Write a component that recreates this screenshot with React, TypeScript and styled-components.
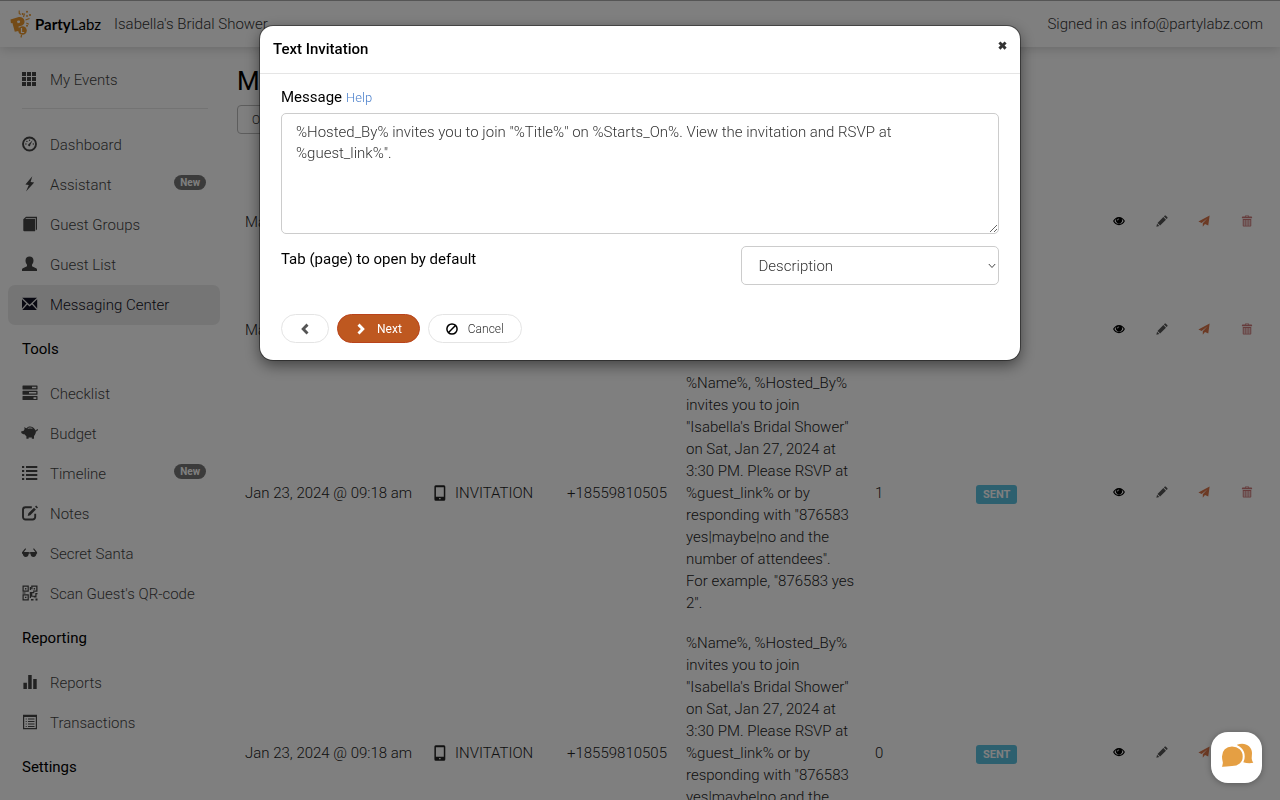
import React from "react";
import styled, { createGlobalStyle } from "styled-components";

const GlobalStyle = createGlobalStyle`
  *, *::before, *::after { box-sizing: border-box; }
  body {
    margin: 0;
    overflow: hidden;
    background: #fff;
    color: #333;
    font: 300 15px/22px Roboto, "Liberation Sans", sans-serif;
  }
  button, select, textarea { font: inherit; color: inherit; }
  a { color: inherit; text-decoration: none; }
`;

/* ---------- icons ---------- */

type IconName =
  | "grid" | "dashboard" | "flash" | "book" | "user" | "envelope" | "tasks"
  | "piggy" | "list" | "edit" | "glasses" | "qrcode" | "stats" | "listAlt"
  | "phone" | "eye" | "pencil" | "send" | "trash" | "left" | "right" | "ban" | "close";

const glyphs: Record<IconName, React.ReactNode> = {
  grid: <path d="M0 1h4v4H0zM5 1h4v4H5zM10 1h4v4h-4zM0 6h4v4H0zM5 6h4v4H5zM10 6h4v4h-4zM0 11h4v4H0zM5 11h4v4H5zM10 11h4v4h-4z" />,
  dashboard: (
    <>
      <circle cx="7.500" cy="8" r="6.500" fill="none" stroke="currentColor" strokeWidth="1.900" />
      <path d="M10.700 4.200 8.300 8.800a1.100 1.100 0 1 1-1.500-.7z" />
      <circle cx="3.900" cy="8" r=".7" /><circle cx="4.900" cy="5.400" r=".7" />
      <circle cx="7.500" cy="4.200" r=".7" /><circle cx="11.300" cy="8" r=".7" />
    </>
  ),
  flash: <path d="M10.300.3 3.400 8.500l3.400.6L4 15.500 12.200 6.600l-3.600-.6z" />,
  book: <path d="M1.300 3.200 4 .7h11v12.600l-1.300 1.400V2H4.200L3.300 2.800h9.700V15.300H2.300a1 1 0 0 1-1-1z" />,
  user: <path d="M7.500.6c2.400 0 4 1.500 4 4 0 1.800-.7 3.200-1.500 4.100v1.500l4.100 2c.6.300.9.800.9 1.400v1.500H0v-1.500c0-.6.3-1.100.9-1.400l4.100-2V8.700C4.200 7.800 3.500 6.400 3.500 4.600c0-2.500 1.600-4 4-4z" />,
  envelope: <path d="M.2 1.800H15L7.600 8.700zM0 3.300 4.400 7.600 0 12.600zM15.200 3.300 10.800 7.600l4.400 5zM5.300 8.500l2.300 2.100 2.300-2.100 5 5.500H.3z" />,
  tasks: (
    <path fillRule="evenodd" d="M1 .5h14a.5.5 0 0 1 .5.5v3a.5.5 0 0 1-.5.500H1A.5.5 0 0 1 .5 4V1A.5.5 0 0 1 1 .5zM10 1.700v1.600h4.300V1.700zM1 5.800h14a.5.5 0 0 1 .5.5v3a.5.5 0 0 1-.5.500H1a.5.5 0 0 1-.5-.5v-3a.5.5 0 0 1 .5-.5zM7 7v1.600h7.300V7zM1 11.100h14a.5.5 0 0 1 .5.500v3a.5.5 0 0 1-.5.500H1a.5.5 0 0 1-.5-.5v-3a.5.5 0 0 1 .5-.5zM11.500 12.300v1.600h2.800v-1.600z" />
  ),
  piggy: (
    <>
      <path d="M4.600 3.200c.8-1.100 2-1.700 3.400-1.700 2 0 3.700 1 4.600 2.600l1.100 1.400c.9-.1 1.200-.6 1-1.400h1c.4 1.500-.5 2.400-1.800 2.500 0 1.700-.7 3.200-1.900 4.300v2.900H9.800v-1.400H6.600v1.400H4.400v-2.600c-.8-.5-1.400-1.100-1.900-1.900H1.300L-.7 8V6.300l2.200-.4c.3-.8.7-1.500 1.200-2L2 2.200z" />
      <path d="M5.800 3.500c1.400-.7 3-.7 4.500 0" fill="none" stroke="#fff" strokeWidth=".9" />
    </>
  ),
  list: <path d="M0 1h2.200v2H0zM4 1h11.300v2H4zM0 5h2.200v2H0zM4 5h11.300v2H4zM0 9h2.200v2H0zM4 9h11.300v2H4zM0 13h2.200v2H0zM4 13h11.300v2H4z" />,
  edit: (
    <>
      <path d="M9.800 2.200H3.500A2.500 2.500 0 0 0 1 4.700V12a2.500 2.500 0 0 0 2.500 2.500h7.200a2.500 2.500 0 0 0 2.500-2.500V8.700" fill="none" stroke="currentColor" strokeWidth="1.900" />
      <path d="m12 2.700 1.900 1.900-5.600 5.600-2.600.8.700-2.700zM13 1.800 14.200.6 16 2.400l-1.100 1.200z" />
    </>
  ),
  glasses: (
    <path d="M3.300 3.300 4.100 4 1.900 7h4.500c.7.500 1.700.5 2.400 0h4.500L11.100 4l.8-.7 3.200 4v1.500h-.6c-.2 2-1.300 3.200-3 3.200-1.800 0-2.800-1.200-3-3.300-.5-.3-1.300-.3-1.800 0C6.500 10.800 5.500 12 3.700 12 2 12 .9 10.800.7 8.800H0V7.300z" />
  ),
  qrcode: (
    <path fillRule="evenodd" d="M.5.5h6.300v6.300H.5zM1.700 1.700v3.900h3.900V1.700zM3 3h1.400v1.400H3zM9.200.5h6.300v6.300H11V5.500h3.200V1.800h-3.700v2.400H9.200zM11.700 3h1.400v1.400h-1.400zM.5 9.200h6.300v6.300H.5zM1.700 10.400v3.900h3.900v-3.900zM3 11.700h1.400v1.400H3zM7.800 2H9v3H7.800zM7.800 7h4.500v1.300h-2v2.500h3V8h2.200v1.300h-1v3.200h-2.800v-.800H9v1.400H7.800zM.5 7.500h3v1h-3zM9 14h2.500v1.500H9zM13.500 13.500h2v2h-2z" />
  ),
  stats: <path d="M1.400 8.800h3.500V15H1.400zM6.200 1h3.500v14H6.200zM11.200 5h3.500v10h-3.500z" />,
  listAlt: (
    <path fillRule="evenodd" d="M1 .7h14v14.600H1zM2.200 3v11.100h11.600V3zM3.700 4.500h1v1h-1zM6 4.500h6.500v1H6zM3.700 7h1v1h-1zM6 7h6.500v1H6zM3.700 9.500h1v1h-1zM6 9.500h6.500v1H6zM3.700 12h1v1h-1zM6 12h6.500v1H6z" />
  ),
  phone: (
    <path fillRule="evenodd" d="M3 .2h7.700A1.500 1.500 0 0 1 12.300 1.800v12.400a1.500 1.500 0 0 1-1.600 1.600H3a1.500 1.500 0 0 1-1.600-1.600V1.800A1.500 1.500 0 0 1 3 .2zM2.900 2.200v9.600h7.900V2.200zM6.100 12.900v1.400h1.500v-1.400z" />
  ),
  eye: (
    <path fillRule="evenodd" d="M8 2.500c3.600 0 6.400 2.400 7.900 5.500-1.500 3.100-4.300 5.500-7.900 5.500S1.600 11.100.1 8C1.600 4.900 4.400 2.500 8 2.500zM4.600 5C3.500 5.700 2.600 6.800 1.900 8c1.300 2.300 3.500 4 6.100 4s4.800-1.700 6.100-4c-.7-1.200-1.600-2.300-2.700-3a4.100 4.100 0 1 1-6.800 0zM8.100 4.600c-1.500 0-2.600 1.100-2.600 2.500l1.200.2c0-.9.600-1.500 1.500-1.600z" />
  ),
  pencil: <path d="m12.900.8 2.300 2.300c.4.400.4.900 0 1.200l-1.100 1.100-3.500-3.500L11.700.8c.4-.4.900-.4 1.200 0zM9.800 2.700l3.500 3.500-7.800 7.800-3.500-3.500zM1.400 11.500l3.100 3.100L.5 15.500z" />,
  send: <path d="M15.500.6 13.700 14l-4.400-1.900-2.900 3.400v-4.600l6.300-6.700-7.800 6.300L.5 8.700z" />,
  trash: (
    <path fillRule="evenodd" d="M5.500 2V.5h5V2h3.300c.6 0 1 .4 1 1v1.400H1.200V3c0-.6.4-1 1-1zm1-.6V2h3v-.6zM2.300 5.400h11.400v9c0 .6-.4 1-1 1H3.300c-.6 0-1-.4-1-1zM3.700 6.600v7.600h1.100V6.600zM6.300 6.600v7.600h1.100V6.600zM8.700 6.600v7.600h1.100V6.600zM11.200 6.600v7.600h1.100V6.600z" />
  ),
  left: <path d="m10 .8 2.700 2.700L8.200 8l4.500 4.500L10 15.200 2.900 8z" />,
  right: <path d="M6 .8 3.300 3.500 7.800 8l-4.500 4.500L6 15.200 13.100 8z" />,
  ban: (
    <g fill="none" stroke="currentColor" strokeWidth="2">
      <circle cx="8" cy="8" r="6.800" />
      <path d="m3.400 12.600 9.200-9.200" />
    </g>
  ),
  close: <path d="M2 5 5 2l3 3 3-3 3 3-3 3 3 3-3 3-3-3-3 3-3-3 3-3z" />,
};

const Svg = styled.svg`
  display: block;
  flex: none;
  overflow: visible;
  fill: currentColor;
`;

function Icon({ name, size = 16 }: { name: IconName; size?: number }) {
  return <Svg viewBox="0 0 16 16" width={size} height={size} aria-hidden="true">{glyphs[name]}</Svg>;
}

/* ---------- top bar ---------- */

const TopBar = styled.header`
  position: relative;
  display: flex;
  align-items: center;
  height: 47px;
  padding: 0 17px 0 9px;
  border-top: 1px solid #aaa;
  box-shadow: 0 1px 12px rgba(0, 0, 0, 0.2);
  background: #fff;
  color: #333;
`;

const Brand = styled.a`
  display: flex;
  align-items: center;
  gap: 2px;
  width: 92px;
  color: #000;
  font: 700 15px/20px Lato, sans-serif;
`;

const BrandLight = styled.span`
  font-weight: 400;
`;

const EventName = styled.span`
  margin-left: 13px;
`;

const SignedIn = styled.span`
  margin-left: auto;
`;

function Logo() {
  return (
    <svg width="24" height="28" viewBox="0 0 24 28" aria-hidden="true">
      <path fillRule="evenodd" fill="#e8972e" d="M1.500 9.500 9 7.200c3-.9 5.800.5 6.400 3.200.7 2.900-1 5-4.200 5.700l-1.700.4 1 4.200-4.700 1.100L3.400 13 1.900 13.300zM8 10.900l.6 2.400 1.500-.4c1.600-.4 1.300-2.800-.5-2.400z" />
      <circle cx="13.500" cy="20.500" r="4.300" fill="#e8972e" />
      <path d="M12.500 18v4.500h2.700" fill="none" stroke="#fff" strokeWidth="1.200" />
      <path d="m12.600 25-.6 2.500" stroke="#e8972e" strokeWidth="1.200" />
      <path d="M10.200.5v3l1.500 1M14.500 7l1-3.500M16.500 10l4-1.500M17.300 13l2.500 1.300" fill="none" stroke="#e8972e" strokeWidth="1.100" />
      <g fill="#e8972e">
        <circle cx="13.700" cy="4" r="1" /><circle cx="18" cy="1.800" r="1" />
        <circle cx="21" cy="5" r="1.100" /><circle cx="18" cy="6" r=".9" />
        <circle cx="18" cy="15.800" r="1" />
      </g>
    </svg>
  );
}

/* ---------- sidebar ---------- */

const Layout = styled.div`
  display: flex;
  align-items: flex-start;
`;

const Sidebar = styled.nav`
  flex: none;
  width: 229px;
  padding: 13px 9px 0 8px;
`;

const NavItem = styled.a<{ $active?: boolean }>`
  display: flex;
  align-items: center;
  height: 40px;
  padding: 0 14px;
  border-radius: 7px;
  background: ${(p) => (p.$active ? "#ebebeb" : "transparent")};
  color: ${(p) => (p.$active ? "#112" : "#444")};
  svg { margin: 0 12px 3px 0; }
`;

const NavBadge = styled.span`
  margin: 0 0 5px auto;
  padding: 0 6px;
  border-radius: 8px;
  background: #777;
  color: #fff;
  font-size: 10px;
  font-weight: 700;
  line-height: 15px;
`;

const NavLinks = styled.div`
  width: 212px;
`;

const NavRule = styled.hr`
  height: 1px;
  margin: 8px 12px 16px 14px;
  border: 0;
  background: #e6e6e6;
`;

const NavHeading = styled.h2`
  margin: 0;
  padding: 0 14px;
  color: #000;
  font-size: 15px;
  font-weight: 400;
  line-height: 49px;
`;

type Link = { icon: IconName; label: string; active?: boolean; isNew?: boolean };

const mainLinks: Link[] = [
  { icon: "dashboard", label: "Dashboard" },
  { icon: "flash", label: "Assistant", isNew: true },
  { icon: "book", label: "Guest Groups" },
  { icon: "user", label: "Guest List" },
  { icon: "envelope", label: "Messaging Center", active: true },
];
const toolLinks: Link[] = [
  { icon: "tasks", label: "Checklist" },
  { icon: "piggy", label: "Budget" },
  { icon: "list", label: "Timeline", isNew: true },
  { icon: "edit", label: "Notes" },
  { icon: "glasses", label: "Secret Santa" },
  { icon: "qrcode", label: "Scan Guest's QR-code" },
];
const reportLinks: Link[] = [
  { icon: "stats", label: "Reports" },
  { icon: "listAlt", label: "Transactions" },
];

function NavGroup({ links }: { links: Link[] }) {
  return (
    <NavLinks>
      {links.map((l) => (
        <NavItem key={l.label} href="#" $active={l.active}>
          <Icon name={l.icon} />
          {l.label}
          {l.isNew && <NavBadge>New</NavBadge>}
        </NavItem>
      ))}
    </NavLinks>
  );
}

/* ---------- message list ---------- */

const Main = styled.main`
  flex: 1;
  min-width: 0;
  padding: 18px 12px 0 8px;
`;

const PageTitle = styled.h1`
  margin: 0;
  color: #000;
  font-size: 26px;
  font-weight: 400;
  line-height: 32px;
`;

const OptionsButton = styled.button`
  display: block;
  height: 29px;
  margin: 8px 0 14px;
  padding: 0 14px;
  border: 1px solid #bbb;
  border-radius: 4px;
  background: #fff;
  font-size: 12px;
`;

const Table = styled.table`
  width: 100%;
  border-collapse: collapse;
  table-layout: fixed;
  color: #222;
`;

const Row = styled.tr<{ $height: number }>`
  height: ${(p) => p.$height}px;
`;

const Cell = styled.td<{ $center?: boolean }>`
  padding: 9px ${(p) => (p.$center ? 0 : 8)}px;
  text-align: ${(p) => (p.$center ? "center" : "left")};
  white-space: nowrap;
`;

const TextCell = styled(Cell)`
  padding-right: 11px;
  white-space: normal;
`;

const Kind = styled.span`
  display: flex;
  align-items: center;
  gap: 6px;
`;

const Status = styled.span`
  display: inline-block;
  padding: 0 7px;
  border-radius: 3px;
  background: #5bc0de;
  color: #fff;
  font-size: 11px;
  font-weight: 700;
  line-height: 19px;
`;

const Action = styled.button<{ $color: string }>`
  display: inline-block;
  padding: 0;
  border: 0;
  background: none;
  color: ${(p) => p.$color};
`;

const columnWidths = [188, 134, 119, 0, 101, 130, 42, 43, 42, 43];

const invite =
  "%Name%, %Hosted_By% invites you to join \"Isabella's Bridal Shower\" on Sat, Jan 27, 2024 at 3:30 PM. Please RSVP at %guest_link% or by responding with \"876583 yes|maybe|no and the number of attendees\". For example, \"876583 yes 2\".";

const messages = [
  { date: "Mar 12, 2024", height: 148 },
  { date: "Mar 12, 2024", height: 67 },
  { date: "Jan 23, 2024 @ 09:18 am", height: 260, kind: "INVITATION", phone: "+18559810505", text: invite, count: 1 },
  { date: "Jan 23, 2024 @ 09:18 am", height: 260, kind: "INVITATION", phone: "+18559810505", text: invite, count: 0 },
];

const actions: { icon: IconName; label: string; color: string }[] = [
  { icon: "eye", label: "View", color: "#000" },
  { icon: "pencil", label: "Edit", color: "#555" },
  { icon: "send", label: "Send", color: "#d97448" },
  { icon: "trash", label: "Delete", color: "#cc7878" },
];

/* ---------- dialog ---------- */

const Backdrop = styled.div`
  position: fixed;
  inset: 0;
  padding: 26px 20px;
  background: rgba(0, 0, 0, 0.5);
`;

const Dialog = styled.section`
  max-width: 760px;
  margin: 0 auto;
  border-radius: 13px;
  background: #fff;
  box-shadow: 0 0 0 1px rgba(0, 0, 0, 0.4), 0 5px 15px rgba(0, 0, 0, 0.5);
`;

const DialogHeader = styled.header`
  display: flex;
  align-items: flex-start;
  justify-content: space-between;
  padding: 12px 12px 12px 13px;
  border-bottom: 1px solid #e5e5e5;
`;

const DialogTitle = styled.h2`
  margin: 0;
  color: #000;
  font-size: 15px;
  font-weight: 500;
  line-height: 23px;
`;

const CloseButton = styled.button`
  padding: 2px 0;
  border: 0;
  background: none;
  color: #333;
`;

const DialogBody = styled.form`
  padding: 12px 21px 17px;
`;

const FieldLabel = styled.label`
  color: #000;
  font-size: 15px;
  font-weight: 400;
`;

const HelpLink = styled.a`
  margin-left: 4px;
  color: #4a7fcb;
  font-size: 13px;
`;

const MessageBox = styled.textarea`
  display: block;
  width: 100%;
  height: 121px;
  margin: 4px 0 12px;
  padding: 8px 14px;
  border: 1px solid #ccc;
  border-radius: 5px;
  background: #fff;
  color: #333;
  font-size: 15px;
  line-height: 21px;
  resize: vertical;
`;

const TabRow = styled.div`
  display: flex;
  align-items: flex-start;
  justify-content: space-between;
  line-height: 26px;
`;

const SelectWrap = styled.div`
  position: relative;
  width: 36%;
  color: #333;
`;

const Select = styled.select`
  display: block;
  width: 100%;
  height: 39px;
  padding: 0 17px;
  border: 1px solid #ccc;
  border-radius: 5px;
  background: #fff;
  font-size: 15px;
  appearance: none;
`;

const Chevron = styled.svg`
  position: absolute;
  top: 17px;
  right: 3px;
  pointer-events: none;
`;

const Buttons = styled.div`
  display: flex;
  gap: 8px;
  margin-top: 29px;
`;

const Pill = styled.button<{ $primary?: boolean; $iconColor: string }>`
  display: flex;
  align-items: center;
  gap: 10px;
  height: 29px;
  padding: 0 17px;
  border: 1px solid ${(p) => (p.$primary ? "#b9431b" : "#e4e4e4")};
  border-radius: 15px;
  background: ${(p) => (p.$primary ? "#be5820" : "#fff")};
  color: ${(p) => (p.$primary ? "#fff" : "#333")};
  font-size: 12px;
  font-weight: ${(p) => (p.$primary ? 400 : 300)};
  svg { color: ${(p) => p.$iconColor}; }
`;

const ChatButton = styled.button`
  position: fixed;
  right: 18px;
  bottom: 17px;
  display: grid;
  place-items: center;
  width: 51px;
  height: 51px;
  padding: 0 0 3px;
  border: 0;
  border-radius: 17px;
  background: #fff;
  box-shadow: 0 1px 6px rgba(0, 0, 0, 0.3);
`;

export default function App() {
  return (
    <>
      <GlobalStyle />
      <TopBar>
        <Brand href="#">
          <Logo />
          <span>Party<BrandLight>Labz</BrandLight></span>
        </Brand>
        <EventName>Isabella's Bridal Shower</EventName>
        <SignedIn>Signed in as info@partylabz.com</SignedIn>
      </TopBar>

      <Layout>
        <Sidebar>
          <NavGroup links={[{ icon: "grid", label: "My Events" }]} />
          <NavRule />
          <NavGroup links={mainLinks} />
          <NavHeading>Tools</NavHeading>
          <NavGroup links={toolLinks} />
          <NavHeading>Reporting</NavHeading>
          <NavGroup links={reportLinks} />
          <NavHeading>Settings</NavHeading>
        </Sidebar>

        <Main>
          <PageTitle>Messaging Center</PageTitle>
          <OptionsButton type="button">Options</OptionsButton>
          <Table>
            <colgroup>
              {columnWidths.map((w, i) => <col key={i} width={w || undefined} />)}
            </colgroup>
            <tbody>
              {messages.map((m, i) => (
                <Row key={i} $height={m.height}>
                  <Cell>{m.date}</Cell>
                  <Cell>{m.kind && <Kind><Icon name="phone" />{m.kind}</Kind>}</Cell>
                  <Cell>{m.phone}</Cell>
                  <TextCell>{m.text}</TextCell>
                  <Cell>{m.count}</Cell>
                  <Cell>{m.kind && <Status>SENT</Status>}</Cell>
                  {actions.map((a) => (
                    <Cell key={a.label} $center>
                      <Action type="button" aria-label={a.label} $color={a.color}>
                        <Icon name={a.icon} size={12} />
                      </Action>
                    </Cell>
                  ))}
                </Row>
              ))}
            </tbody>
          </Table>
        </Main>
      </Layout>

      <Backdrop>
        <Dialog role="dialog" aria-modal="true" aria-labelledby="dialog-title">
          <DialogHeader>
            <DialogTitle id="dialog-title">Text Invitation</DialogTitle>
            <CloseButton type="button" aria-label="Close"><Icon name="close" size={11} /></CloseButton>
          </DialogHeader>
          <DialogBody onSubmit={(e) => e.preventDefault()}>
            <FieldLabel htmlFor="message">Message</FieldLabel>
            <HelpLink href="#">Help</HelpLink>
            <MessageBox
              id="message"
              defaultValue={'%Hosted_By% invites you to join "%Title%" on %Starts_On%. View the invitation and RSVP at %guest_link%".'}
            />
            <TabRow>
              <FieldLabel htmlFor="tab">Tab (page) to open by default</FieldLabel>
              <SelectWrap>
                <Select id="tab" defaultValue="Description">
                  <option>Description</option>
                </Select>
                <Chevron width="8" height="6" viewBox="0 0 8 6" aria-hidden="true">
                  <path d="m.8 1 3.200 3.500L7.200 1" fill="none" stroke="#444" />
                </Chevron>
              </SelectWrap>
            </TabRow>
            <Buttons>
              <Pill type="button" aria-label="Back" $iconColor="#555"><Icon name="left" size={12} /></Pill>
              <Pill type="submit" $primary $iconColor="#fff"><Icon name="right" size={12} />Next</Pill>
              <Pill type="button" $iconColor="#000"><Icon name="ban" size={12} />Cancel</Pill>
            </Buttons>
          </DialogBody>
        </Dialog>
      </Backdrop>

      <ChatButton type="button" aria-label="Open chat">
        <svg width="34" height="26" viewBox="0 0 34 26" aria-hidden="true">
          <path fill="#e59f43" d="M17 1.800C24-1.500 32 2.500 32 10c0 2-.3 3.800-.3 5.200.1 1.900.8 3.300 1.600 4.600-3.500.7-7 .4-10-.6z" />
          <path fill="#e59f43" stroke="#fff" strokeWidth="2" d="M12 2.500c6.700 0 11.700 4.500 11.700 11S18.700 24 12 24c-3.500 0-8 .9-12 .8 1.500-2 2.200-4 1.700-6C1.300 17.300 1 15.300 1 13.500 1 7 5.500 2.500 12 2.500z" />
        </svg>
      </ChatButton>
    </>
  );
}
